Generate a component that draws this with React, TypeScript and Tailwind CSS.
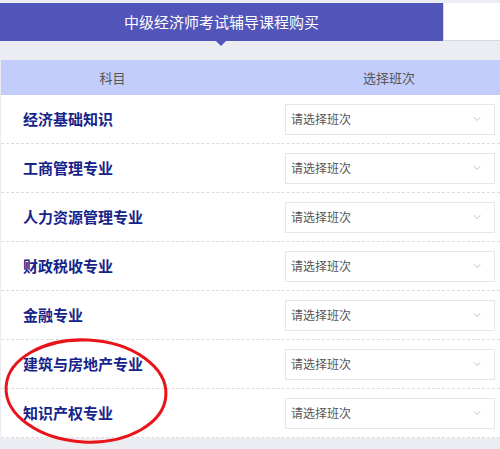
import { ChevronDown } from "lucide-react";

const subjects = [
  "经济基础知识",
  "工商管理专业",
  "人力资源管理专业",
  "财政税收专业",
  "金融专业",
  "建筑与房地产专业",
  "知识产权专业",
];

const font = { fontFamily: '"Noto Sans CJK SC", "Noto Sans", sans-serif' };

function ClassSelect() {
  return (
    <div className="flex h-[31px] w-[210px] items-center justify-between border border-[#e6e6e6] bg-white pl-[5px] pr-[11px]">
      <span className="text-[12px] text-[#555]">请选择班次</span>
      <ChevronDown className="h-[12px] w-[12px] text-[#aaa]" strokeWidth={1.5} />
    </div>
  );
}

export default function App() {
  return (
    <div className="relative h-[449px] w-[500px] overflow-hidden bg-[#ecedf2] pt-[3px]" style={font}>
      <div className="flex h-[38px]">
        <div className="relative flex w-[443px] items-center justify-center bg-[#5154b8] text-[15px] text-white">
          中级经济师考试辅导课程购买
          <span className="absolute bottom-[-5px] left-[216px] h-0 w-0 border-x-[5px] border-t-[5px] border-x-transparent border-t-[#5154b8]" />
        </div>
        <div className="flex-1 border-b border-l border-[#d6d7e0] bg-white" />
      </div>

      <div className="ml-[1px] mt-[19px] bg-white">
        <div className="flex h-[35px] items-center bg-[#c3cdfc] text-[13px] text-[#555]">
          <span className="w-[223px] text-center">科目</span>
          <span className="ml-[54px] w-[222px] text-center">选择班次</span>
        </div>
        {subjects.map((name) => (
          <div
            key={name}
            className="flex h-[49px] items-center justify-between border-b border-dashed border-[#dcdcdc] pl-[22px] pr-[5px]"
          >
            <span className="text-[15px] font-bold text-[#15248a]">{name}</span>
            <ClassSelect />
          </div>
        ))}
      </div>

      <svg className="absolute left-0 top-0" width="500" height="449" viewBox="0 0 500 449">
        <ellipse cx="86" cy="391" rx="80" ry="51" fill="none" stroke="#e8141a" strokeWidth="3" transform="rotate(3 86 391)" />
      </svg>
    </div>
  );
}
